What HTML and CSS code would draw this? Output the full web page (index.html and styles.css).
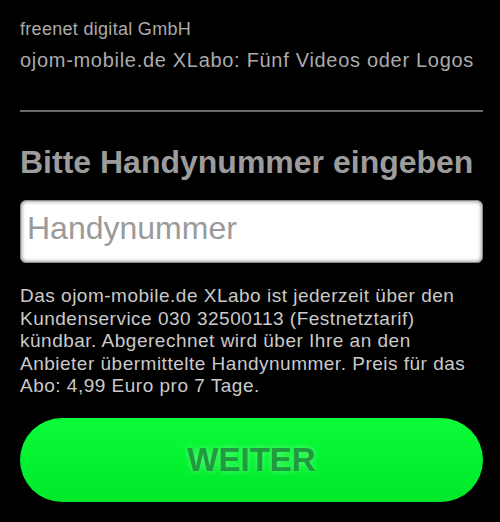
FILE: index.html
```html
<!DOCTYPE html>
<html lang="de">
<head>
    <meta charset="UTF-8">
    <meta name="viewport" content="width=device-width, initial-scale=1.0">
    <title>ojom-mobile.de XLabo</title>
    <link rel="stylesheet" href="styles.css">
</head>
<body>
    <div class="container">
        <p class="company">freenet digital GmbH</p>
        <p class="product">ojom-mobile.de XLabo: Fünf Videos oder Logos</p>
        <hr class="divider">
        <h1>Bitte Handynummer eingeben</h1>
        <input type="tel" class="msisdn" placeholder="Handynummer">
        <p class="terms">Das ojom-mobile.de XLabo ist jederzeit über den Kundenservice 030 32500113 (Festnetztarif) kündbar. Abgerechnet wird über Ihre an den Anbieter übermittelte Handynummer. Preis für das Abo: 4,99 Euro pro 7 Tage.</p>
        <button class="weiter">WEITER</button>
    </div>
</body>
</html>
```

FILE: styles.css
```css
body {
    font-family: "Liberation Sans", Arial, sans-serif;
    background-color: #000;
    margin: 0;
}
.container {
    padding: 17px 17px 20px 20px;
}
.company {
    margin: 0;
    font-size: 18px;
    line-height: 24px;
    letter-spacing: 0.3px;
    color: #ababab;
}
.product {
    margin: 5px 0 0;
    font-size: 20px;
    line-height: 28px;
    letter-spacing: 0.7px;
    color: #ababab;
}
.divider {
    margin: 36px 0 0;
    height: 2px;
    border: none;
    background-color: #6b6b6b;
}
h1 {
    margin: 31px 0 0;
    font-size: 32px;
    line-height: 38px;
    color: #9c9c9c;
}
.msisdn {
    display: block;
    box-sizing: border-box;
    width: 100%;
    height: 63px;
    margin-top: 19px;
    padding: 0 6px 6px;
    font-family: inherit;
    font-size: 32px;
    color: #333;
    background: #fff;
    border: 1px solid #8a8a8a;
    border-radius: 6px;
    box-shadow: inset 0 0 4px rgba(0, 0, 0, 0.55);
    outline: none;
}
.msisdn::placeholder {
    color: #9a9a9a;
}
.terms {
    margin: 22px 0 0;
    font-size: 19px;
    line-height: 22.5px;
    letter-spacing: 0.5px;
    color: #cacaca;
}
.weiter {
    display: block;
    width: 100%;
    height: 84px;
    margin-top: 20px;
    font-family: inherit;
    font-size: 33px;
    font-weight: bold;
    color: #1f9a3e;
    text-shadow: 0 0 6px rgba(140, 255, 160, 0.7);
    background: linear-gradient(#0cfc3a, #02f230 55%, #00e82a);
    border: none;
    border-radius: 42px;
    cursor: pointer;
}
```
